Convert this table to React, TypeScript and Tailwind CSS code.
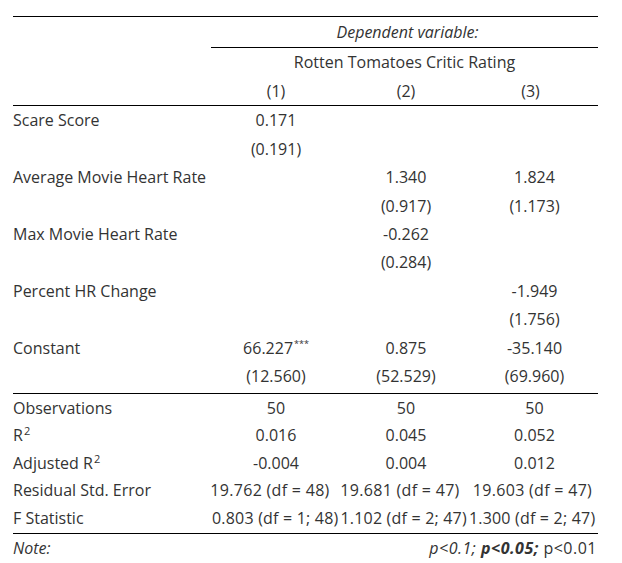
import React from "react";

const font = { fontFamily: '"Open Sans", "Liberation Sans", sans-serif' };

type Row = { label: string; vals: [React.ReactNode, React.ReactNode, React.ReactNode] };

const coefRows: Row[] = [
  { label: "Scare Score", vals: ["0.171", "", ""] },
  { label: "", vals: ["(0.191)", "", ""] },
  { label: "Average Movie Heart Rate", vals: ["", "1.340", "1.824"] },
  { label: "", vals: ["", "(0.917)", "(1.173)"] },
  { label: "Max Movie Heart Rate", vals: ["", "-0.262", ""] },
  { label: "", vals: ["", "(0.284)", ""] },
  { label: "Percent HR Change", vals: ["", "", "-1.949"] },
  { label: "", vals: ["", "", "(1.756)"] },
  {
    label: "Constant",
    vals: [
      <span>
        66.227<sup className="text-[9px] relative top-[-7px] ml-[1px]">***</sup>
      </span>,
      "0.875",
      "-35.140",
    ],
  },
  { label: "", vals: ["(12.560)", "(52.529)", "(69.960)"] },
];

const grid = "grid grid-cols-[198px_130px_130px_127px]";

export default function App() {
  return (
    <div className="w-[622px] h-[563px] bg-white text-[#333333] text-[16px]" style={font}>
      <div className="pt-[16px] pl-[13px]">
        <div className="w-[585px]">
          <div className="border-t border-black" />
          {/* header */}
          <div className={grid + " h-[30px] items-center"}>
            <div />
            <div className="col-span-3 flex justify-center italic leading-none pl-[6px]">
              Dependent variable:
            </div>
          </div>
          <div className={grid}>
            <div />
            <div className="col-span-3 border-t border-black" />
          </div>
          <div className={grid + " h-[28px] items-center"}>
            <div />
            <div className="col-span-3 text-center leading-none">Rotten Tomatoes Critic Rating</div>
          </div>
          <div className={grid + " h-[29px] items-center leading-none"}>
            <div />
            <div className="text-center">(1)</div>
            <div className="text-center">(2)</div>
            <div className="text-center pr-[8px]">(3)</div>
          </div>
          <div className="border-t border-black" />
          {/* coefficients */}
          <div className="flex flex-col">
            {coefRows.map((r, i) => (
              <div key={i} className={grid + " h-[28.44px] items-center leading-none"}>
                <div>{r.label}</div>
                {r.vals.map((v, j) => (
                  <div key={j} className="text-center">
                    {v}
                  </div>
                ))}
              </div>
            ))}
          </div>
          <div className="h-[2.6px]" />
          <div className="border-t border-black" />
          {/* stats */}
          <div className={grid + " h-[27.5px] items-center leading-none"}>
            <div>Observations</div>
            <div className="text-center">50</div>
            <div className="text-center">50</div>
            <div className="text-center">50</div>
          </div>
          <div className={grid + " h-[27.5px] items-center leading-none"}>
            <div>
              R<sup className="text-[11px] relative top-[-6px] ml-[1px]">2</sup>
            </div>
            <div className="text-center">0.016</div>
            <div className="text-center">0.045</div>
            <div className="text-center">0.052</div>
          </div>
          <div className={grid + " h-[27.5px] items-center leading-none"}>
            <div>
              Adjusted R<sup className="text-[11px] relative top-[-6px] ml-[1px]">2</sup>
            </div>
            <div className="text-center">-0.004</div>
            <div className="text-center">0.004</div>
            <div className="text-center">0.012</div>
          </div>
          <div className={grid + " h-[27.5px] items-center leading-none whitespace-nowrap tracking-[0.3px]"}>
            <div className="tracking-normal">Residual Std. Error</div>
            <div className="flex justify-center pr-[12px]">19.762 (df = 48)</div>
            <div className="flex justify-center pr-[12px]">19.681 (df = 47)</div>
            <div className="flex justify-center pr-[4px]">19.603 (df = 47)</div>
          </div>
          <div className={grid + " h-[27.5px] items-center leading-none whitespace-nowrap"}>
            <div>F Statistic</div>
            <div className="col-span-3 flex gap-[2px] pl-[1px] tracking-[0.2px]">
              <span>0.803 (df = 1; 48)</span>
              <span>1.102 (df = 2; 47)</span>
              <span>1.300 (df = 2; 47)</span>
            </div>
          </div>
          <div className="h-[1.5px]" />
          <div className="border-t border-black" />
          <div className="h-[29px] flex items-center justify-between leading-none">
            <span className="italic">Note:</span>
            <span className="pr-[1px] tracking-[0.5px]">
              <span className="italic">p&lt;0.1;</span>{" "}
              <span className="italic font-bold">p&lt;0.05;</span> p&lt;0.01
            </span>
          </div>
        </div>
      </div>
    </div>
  );
}
